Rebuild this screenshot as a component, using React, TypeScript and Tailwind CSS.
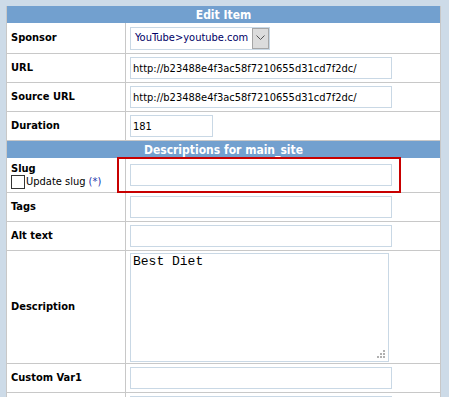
import React from 'react';

const font = { fontFamily: '"DejaVu Sans Condensed", "DejaVu Sans", Verdana, sans-serif' };

function Row({ label, children, h = 'h-[29px]' }: { label: React.ReactNode; children: React.ReactNode; h?: string }) {
  return (
    <div className={`grid grid-cols-[119px_1fr] border-b border-[#c8c8c8] ${h}`}>
      <div className="flex items-center border-r border-[#c8c8c8] pl-[4px] text-[11px] font-bold text-black">{label}</div>
      <div className="flex items-center pl-[4px]">{children}</div>
    </div>
  );
}

function TextInput({ value = '', w = 'w-[262px]' }: { value?: string; w?: string }) {
  return (
    <input
      readOnly
      value={value}
      className={`h-[22px] ${w} border border-[#c9d8e5] bg-white px-[2px] text-[11px] text-black outline-none`}
      style={font}
    />
  );
}

function Header({ title }: { title: string }) {
  return (
    <div className="flex h-[17px] items-center justify-center bg-[#72a0cf] text-[12px] font-bold text-white">{title}</div>
  );
}

export default function App() {
  return (
    <div className="h-[397px] w-[449px] overflow-hidden bg-[#cddbe8] pt-[6px] pl-[6px]" style={font}>
      <div className="w-[435px] border-x border-[#c8c8c8] bg-white">
        <Header title="Edit Item" />

        <Row label="Sponsor" h="h-[31px]">
          <div className="flex h-[23px] w-[140px] border border-[#c9d8e5] bg-white">
            <span className="flex flex-1 items-center pl-[4px] text-[11px] text-[#000066]">YouTube&gt;youtube.com</span>
            <span className="flex w-[17px] items-center justify-center border border-[#a6a6a6] bg-[#dcdcdc]">
              <svg width="9" height="6" viewBox="0 0 9 6">
                <path d="M0.5 0.5 L4.5 4.5 L8.5 0.5" fill="none" stroke="#555" strokeWidth="1" />
              </svg>
            </span>
          </div>
        </Row>
        <Row label="URL">
          <TextInput value="http://b23488e4f3ac58f7210655d31cd7f2dc/" />
        </Row>
        <Row label="Source URL">
          <TextInput value="http://b23488e4f3ac58f7210655d31cd7f2dc/" />
        </Row>
        <Row label="Duration">
          <TextInput value="181" w="w-[83px]" />
        </Row>

        <Header title="Descriptions for main_site" />

        {/* Slug row with the red highlight */}
        <div className="relative grid h-[35px] grid-cols-[119px_1fr] border-b border-[#c8c8c8]">
          <div className="flex flex-col justify-center border-r border-[#c8c8c8] pl-[4px] text-[11px] text-black">
            <span className="font-bold leading-[13px]">Slug</span>
            <label className="flex items-center leading-[14px]">
              <span className="mr-[1px] inline-block h-[14px] w-[14px] border border-[#333] bg-white" />
              <span>Update slug <span className="text-[#2233aa]">(*)</span></span>
            </label>
          </div>
          <div className="flex items-center pl-[4px]">
            <TextInput />
          </div>
          <div className="pointer-events-none absolute top-[-1px] left-[110px] h-[36px] w-[284px] border-2 border-[#c80000]" />
        </div>

        <Row label="Tags">
          <TextInput />
        </Row>
        <Row label="Alt text">
          <TextInput />
        </Row>
        <Row label="Description" h="h-[113px]">
          <div className="relative">
            <textarea
              readOnly
              value="Best Diet"
              className="block h-[109px] w-[259px] resize-none border border-[#c9d8e5] px-[2px] py-0 text-[13px] leading-[15px] text-black outline-none"
              style={{ fontFamily: '"Liberation Mono", "Courier New", monospace' }}
            />
            <svg className="absolute right-[3px] bottom-[3px]" width="9" height="9" viewBox="0 0 9 9">
              <rect x="6" y="0" width="2" height="2" fill="#b0b0b0" />
              <rect x="3" y="3" width="2" height="2" fill="#b0b0b0" />
              <rect x="6" y="3" width="2" height="2" fill="#b0b0b0" />
              <rect x="0" y="6" width="2" height="2" fill="#b0b0b0" />
              <rect x="3" y="6" width="2" height="2" fill="#b0b0b0" />
              <rect x="6" y="6" width="2" height="2" fill="#b0b0b0" />
            </svg>
          </div>
        </Row>
        <Row label="Custom Var1">
          <TextInput />
        </Row>
        <Row label="">
          <TextInput />
        </Row>
      </div>
    </div>
  );
}
